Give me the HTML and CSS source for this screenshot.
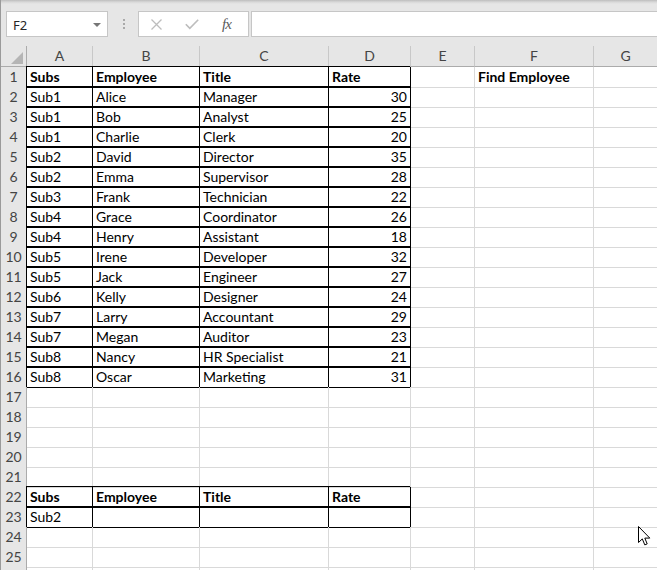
FILE: index.html
```html
<!DOCTYPE html>
<html>
<head>
<meta charset="utf-8">
<link rel="stylesheet" href="styles.css">
</head>
<body>
<div class="app">
  <div class="toolbar">
    <div class="namebox"><span class="nb-text">F2</span><span class="nb-arrow"></span></div>
    <div class="dots"><i></i><i></i><i></i></div>
    <div class="fxbox">
      <svg class="ic-x" width="11" height="11" viewBox="0 0 11 11"><path d="M0.5 0.5L10.5 10.5M10.5 0.5L0.5 10.5" stroke="#bdbdbd" stroke-width="1.3" fill="none"/></svg>
      <svg class="ic-check" width="14" height="11" viewBox="0 0 14 11"><path d="M0.8 5.2L4.8 9.4L13.2 0.8" stroke="#bdbdbd" stroke-width="1.6" fill="none"/></svg>
      <span class="fx">fx</span>
    </div>
    <div class="input"></div>
  </div>
  <div class="sheet">
    <div class="r hr"><div class="corner"><svg width="13" height="13" viewBox="0 0 13 13"><path d="M12 0V12H0Z" fill="#b5b5b5"/></svg></div><div class="ch">A</div><div class="ch">B</div><div class="ch">C</div><div class="ch">D</div><div class="ch">E</div><div class="ch">F</div><div class="ch">G</div></div>
    <div class="r"><div class="h">1</div><div class="c t b">Subs</div><div class="c t b">Employee</div><div class="c t b">Title</div><div class="c t b">Rate</div><div class="c"></div><div class="c b">Find Employee</div><div class="c"></div></div>
    <div class="r"><div class="h">2</div><div class="c t">Sub1</div><div class="c t">Alice</div><div class="c t">Manager</div><div class="c t n">30</div><div class="c"></div><div class="c"></div><div class="c"></div></div>
    <div class="r"><div class="h">3</div><div class="c t">Sub1</div><div class="c t">Bob</div><div class="c t">Analyst</div><div class="c t n">25</div><div class="c"></div><div class="c"></div><div class="c"></div></div>
    <div class="r"><div class="h">4</div><div class="c t">Sub1</div><div class="c t">Charlie</div><div class="c t">Clerk</div><div class="c t n">20</div><div class="c"></div><div class="c"></div><div class="c"></div></div>
    <div class="r"><div class="h">5</div><div class="c t">Sub2</div><div class="c t">David</div><div class="c t">Director</div><div class="c t n">35</div><div class="c"></div><div class="c"></div><div class="c"></div></div>
    <div class="r"><div class="h">6</div><div class="c t">Sub2</div><div class="c t">Emma</div><div class="c t">Supervisor</div><div class="c t n">28</div><div class="c"></div><div class="c"></div><div class="c"></div></div>
    <div class="r"><div class="h">7</div><div class="c t">Sub3</div><div class="c t">Frank</div><div class="c t">Technician</div><div class="c t n">22</div><div class="c"></div><div class="c"></div><div class="c"></div></div>
    <div class="r"><div class="h">8</div><div class="c t">Sub4</div><div class="c t">Grace</div><div class="c t">Coordinator</div><div class="c t n">26</div><div class="c"></div><div class="c"></div><div class="c"></div></div>
    <div class="r"><div class="h">9</div><div class="c t">Sub4</div><div class="c t">Henry</div><div class="c t">Assistant</div><div class="c t n">18</div><div class="c"></div><div class="c"></div><div class="c"></div></div>
    <div class="r"><div class="h">10</div><div class="c t">Sub5</div><div class="c t">Irene</div><div class="c t">Developer</div><div class="c t n">32</div><div class="c"></div><div class="c"></div><div class="c"></div></div>
    <div class="r"><div class="h">11</div><div class="c t">Sub5</div><div class="c t">Jack</div><div class="c t">Engineer</div><div class="c t n">27</div><div class="c"></div><div class="c"></div><div class="c"></div></div>
    <div class="r"><div class="h">12</div><div class="c t">Sub6</div><div class="c t">Kelly</div><div class="c t">Designer</div><div class="c t n">24</div><div class="c"></div><div class="c"></div><div class="c"></div></div>
    <div class="r"><div class="h">13</div><div class="c t">Sub7</div><div class="c t">Larry</div><div class="c t">Accountant</div><div class="c t n">29</div><div class="c"></div><div class="c"></div><div class="c"></div></div>
    <div class="r"><div class="h">14</div><div class="c t">Sub7</div><div class="c t">Megan</div><div class="c t">Auditor</div><div class="c t n">23</div><div class="c"></div><div class="c"></div><div class="c"></div></div>
    <div class="r"><div class="h">15</div><div class="c t">Sub8</div><div class="c t">Nancy</div><div class="c t">HR Specialist</div><div class="c t n">21</div><div class="c"></div><div class="c"></div><div class="c"></div></div>
    <div class="r"><div class="h">16</div><div class="c t">Sub8</div><div class="c t">Oscar</div><div class="c t">Marketing</div><div class="c t n">31</div><div class="c"></div><div class="c"></div><div class="c"></div></div>
    <div class="r"><div class="h">17</div><div class="c"></div><div class="c"></div><div class="c"></div><div class="c"></div><div class="c"></div><div class="c"></div><div class="c"></div></div>
    <div class="r"><div class="h">18</div><div class="c"></div><div class="c"></div><div class="c"></div><div class="c"></div><div class="c"></div><div class="c"></div><div class="c"></div></div>
    <div class="r"><div class="h">19</div><div class="c"></div><div class="c"></div><div class="c"></div><div class="c"></div><div class="c"></div><div class="c"></div><div class="c"></div></div>
    <div class="r"><div class="h">20</div><div class="c"></div><div class="c"></div><div class="c"></div><div class="c"></div><div class="c"></div><div class="c"></div><div class="c"></div></div>
    <div class="r"><div class="h">21</div><div class="c"></div><div class="c"></div><div class="c"></div><div class="c"></div><div class="c"></div><div class="c"></div><div class="c"></div></div>
    <div class="r"><div class="h">22</div><div class="c t b">Subs</div><div class="c t b">Employee</div><div class="c t b">Title</div><div class="c t b">Rate</div><div class="c"></div><div class="c"></div><div class="c"></div></div>
    <div class="r"><div class="h">23</div><div class="c t">Sub2</div><div class="c t"></div><div class="c t"></div><div class="c t"></div><div class="c"></div><div class="c"></div><div class="c"></div></div>
    <div class="r"><div class="h">24</div><div class="c"></div><div class="c"></div><div class="c"></div><div class="c"></div><div class="c"></div><div class="c"></div><div class="c"></div></div>
    <div class="r"><div class="h">25</div><div class="c"></div><div class="c"></div><div class="c"></div><div class="c"></div><div class="c"></div><div class="c"></div><div class="c"></div></div>
    <div class="r"><div class="h"></div><div class="c"></div><div class="c"></div><div class="c"></div><div class="c"></div><div class="c"></div><div class="c"></div><div class="c"></div></div>
  </div>
  <svg class="cursor" width="13" height="21" viewBox="0 0 13 21"><path d="M0.5 0.5V16.5L4.3 12.9L6.8 18.9L9.2 17.9L6.8 12.1H11.8Z" fill="#fff" stroke="#000" stroke-width="1" stroke-linejoin="miter"/></svg>
</div>
</body>
</html>
```

FILE: styles.css
```css
html, body {
  margin: 0;
  padding: 0;
  width: 657px;
  height: 570px;
  overflow: hidden;
  background: #ffffff;
}

.app {
  position: relative;
  width: 657px;
  height: 570px;
  overflow: hidden;
  border-left: 1px solid #9a9a9a;
  box-sizing: border-box;
  font-family: Lato, "Liberation Sans", sans-serif;
}

.toolbar {
  display: flex;
  align-items: flex-start;
  height: 37px;
  box-sizing: border-box;
  padding-top: 11px;
  background: linear-gradient(#bdbdbd 0px, #d8d8d8 2px, #e6e6e6 4px, #e6e6e6 100%);
}

.namebox {
  display: flex;
  align-items: center;
  justify-content: space-between;
  margin-left: 5px;
  width: 102px;
  height: 26px;
  box-sizing: border-box;
  border: 1px solid #c6c6c6;
  background: #fff;
  padding: 0 6px 0 6px;
}

.nb-text {
  font-family: "Noto Sans", "Open Sans", sans-serif;
  font-size: 13px;
  color: #262626;
  padding-top: 1px;
}

.nb-arrow {
  width: 0;
  height: 0;
  border-left: 4px solid transparent;
  border-right: 4px solid transparent;
  border-top: 4px solid #767676;
  margin-top: 1px;
}

.dots {
  display: flex;
  flex-direction: column;
  gap: 2px;
  margin-left: 15px;
  margin-top: 8px;
}

.dots i {
  display: block;
  width: 2px;
  height: 2px;
  background: #a9a9a9;
}

.fxbox {
  display: flex;
  align-items: center;
  margin-left: 13px;
  width: 111px;
  height: 26px;
  box-sizing: border-box;
  border: 1px solid #c6c6c6;
  background: #fff;
  padding-left: 12px;
}

.ic-x {
  margin-top: 1px;
}

.ic-check {
  margin-left: 23px;
  margin-top: 1px;
}

.fx {
  margin-left: 23px;
  font-family: "Liberation Serif", "DejaVu Serif", serif;
  font-style: italic;
  font-size: 15px;
  color: #5a5a5a;
  letter-spacing: -1px;
}

.input {
  flex: 1;
  margin-left: 2px;
  margin-right: -6px;
  height: 26px;
  box-sizing: border-box;
  border: 1px solid #c6c6c6;
  background: #fff;
}

.sheet {
  display: flex;
  flex-direction: column;
}

.r {
  display: grid;
  grid-template-columns: 26px 66px 107px 129px 82px 64px 119px 64px;
  height: 20px;
  flex: none;
}

.hr {
  height: 30px;
  background: #e6e6e6;
  align-items: end;
}

.corner {
  height: 21px;
  box-sizing: border-box;
  border-right: 1px solid #ababab;
  border-bottom: 1px solid #ababab;
  display: flex;
  align-items: flex-end;
  justify-content: flex-end;
  padding: 0 2px 1px 0;
}

.corner svg {
  display: block;
}

.ch {
  height: 21px;
  box-sizing: border-box;
  border-right: 1px solid #c8c8c8;
  border-bottom: 1px solid #ababab;
  text-align: center;
  font-size: 14px;
  line-height: 20px;
  color: #444;
}

.h {
  box-sizing: border-box;
  background: #e6e6e6;
  border-right: 1px solid #ababab;
  border-bottom: 1px solid #d0d0d0;
  text-align: center;
  font-size: 14px;
  line-height: 20px;
  color: #444;
}

.c {
  box-sizing: border-box;
  border-right: 1px solid #d9d9d9;
  border-bottom: 1px solid #d9d9d9;
  font-size: 14px;
  line-height: 20px;
  color: #000;
  padding: 0 3px;
  white-space: nowrap;
}

.c.t {
  border-right-color: #000;
  border-bottom-color: #000;
  box-shadow: -1px -1px 0 #000;
}

.c.b {
  font-weight: bold;
}

.c.n {
  text-align: right;
}

.cursor {
  position: absolute;
  left: 637px;
  top: 526px;
}
```
